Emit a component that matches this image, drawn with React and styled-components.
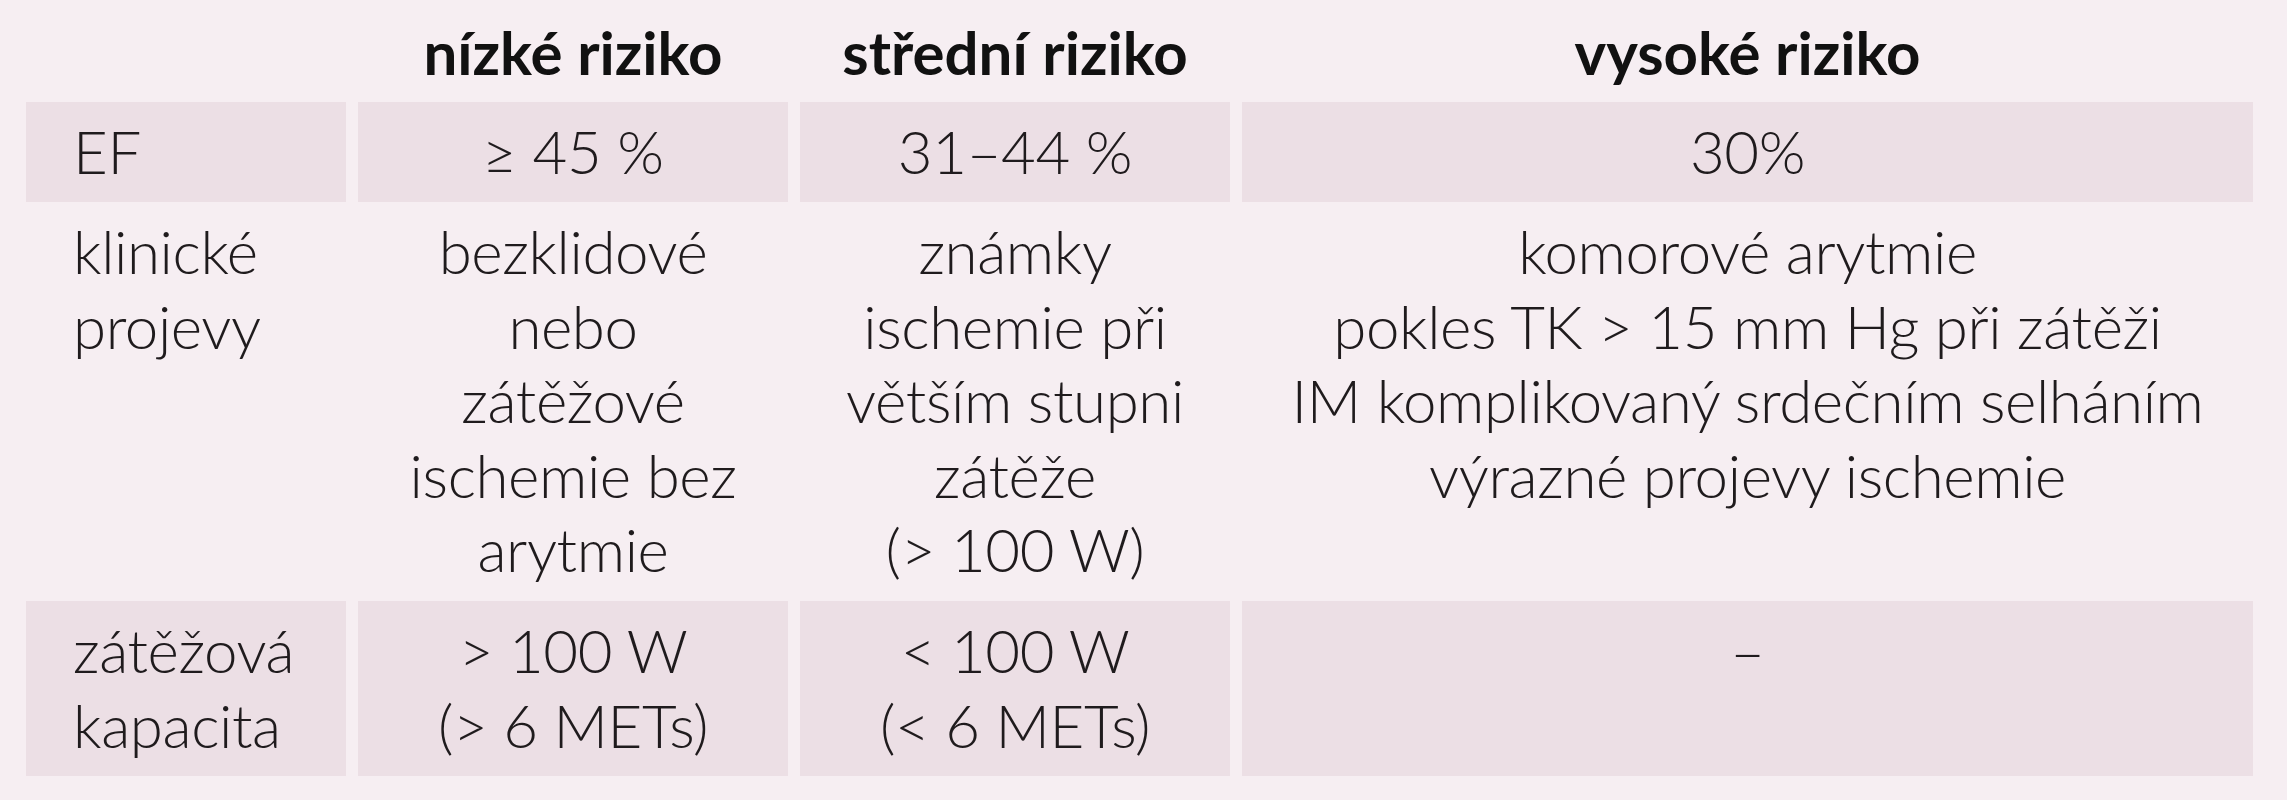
import styled, { createGlobalStyle } from "styled-components";

const GlobalStyle = createGlobalStyle`
  html,
  body {
    margin: 0;
    padding: 0;
    background: #f6eef2;
  }
`;

// data tabulky
const headers = ["nízké riziko", "střední riziko", "vysoké riziko"];

const rows = [
  {
    label: ["EF"],
    shaded: true,
    cells: [["≥ 45 %"], ["31–44 %"], ["30%"]],
  },
  {
    label: ["klinické", "projevy"],
    shaded: false,
    cells: [
      ["bezklidové", "nebo", "zátěžové", "ischemie bez", "arytmie"],
      ["známky", "ischemie při", "větším stupni", "zátěže", "(> 100 W)"],
      [
        "komorové arytmie",
        "pokles TK > 15 mm Hg při zátěži",
        "IM komplikovaný srdečním selháním",
        "výrazné projevy ischemie",
      ],
    ],
  },
  {
    label: ["zátěžová", "kapacita"],
    shaded: true,
    cells: [["> 100 W", "(> 6 METs)"], ["< 100 W", "(< 6 METs)"], ["–"]],
  },
];

const Lines = ({ lines }) =>
  lines.map((line, i) => <Line key={i}>{line}</Line>);

const App = () => {
  return (
    <>
      <GlobalStyle />
      <Page>
        <Table>
          <HeadCell />
          {headers.map((h) => (
            <HeadCell key={h}>{h}</HeadCell>
          ))}
          {rows.map((row, r) => (
            <Row key={r}>
              <Cell $shaded={row.shaded} $left>
                <Lines lines={row.label} />
              </Cell>
              {row.cells.map((c, i) => (
                <Cell key={i} $shaded={row.shaded}>
                  <Lines lines={c} />
                </Cell>
              ))}
            </Row>
          ))}
        </Table>
      </Page>
    </>
  );
};

export default App;

const Page = styled.div`
  width: 100%;
  height: 800px;
  box-sizing: border-box;
  padding: 0 34px 24px 26px;
  background: #f6eef2;
  font-family: Lato, "Liberation Sans", sans-serif;
  color: #1f1b1d;
`;

const Table = styled.div`
  display: grid;
  grid-template-columns: 320px 430px 430px 1011px;
  grid-template-rows: 102px 100px 399px 175px;
  column-gap: 12px;
`;

// řádek se jen rozpustí do mřížky
const Row = styled.div`
  display: contents;
`;

const HeadCell = styled.div`
  padding-top: 15px;
  box-sizing: border-box;
  text-align: center;
  font-size: 60px;
  line-height: 74.5px;
  font-weight: 700;
  color: #111;
  white-space: nowrap;
`;

const Cell = styled.div`
  box-sizing: border-box;
  padding: 12px 0 0 ${(p) => (p.$left ? "47px" : "0")};
  background: ${(p) => (p.$shaded ? "#ecdfe5" : "transparent")};
  text-align: ${(p) => (p.$left ? "left" : "center")};
  font-size: 60px;
  line-height: 74.5px;
  font-weight: 300;
  letter-spacing: -0.4px;
  white-space: nowrap;
`;

const Line = styled.div`
  display: block;
`;
